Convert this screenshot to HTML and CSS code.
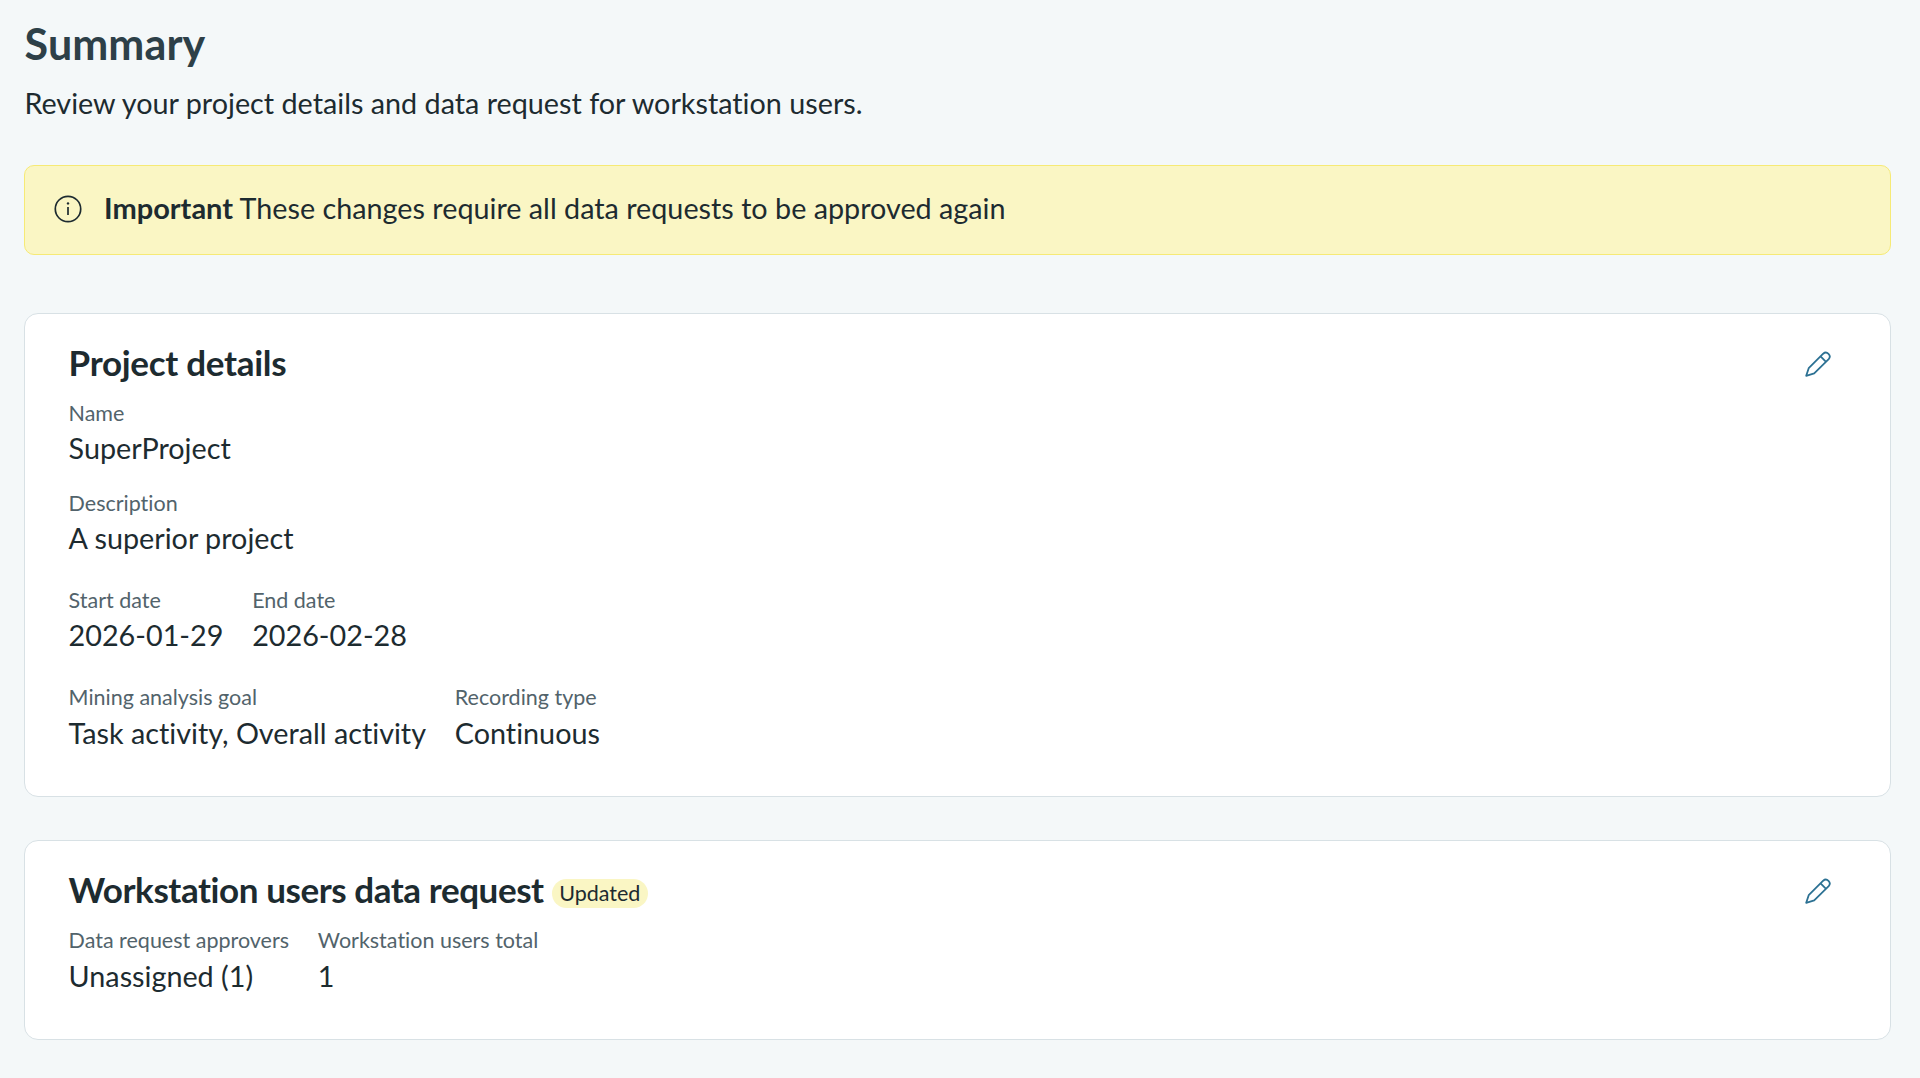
FILE: index.html
```html
<!DOCTYPE html>
<html lang="en">
<head>
    <meta charset="UTF-8">
    <meta name="viewport" content="width=device-width, initial-scale=1.0">
    <title>Summary</title>
    <link rel="stylesheet" href="styles.css">
</head>
<body>
    <main class="summary">
        <h1>Summary</h1>
        <p class="intro">Review your project details and data request for workstation users.</p>

        <div class="alert">
            <svg class="info-icon" viewBox="0 0 28 28">
                <circle cx="14" cy="14" r="12.7"/>
                <path d="M14 12v8"/>
                <circle class="dot" cx="14" cy="8.4" r="1.2"/>
            </svg>
            <p><strong>Important</strong> These changes require all data requests to be approved again</p>
        </div>

        <section class="card project">
            <div class="card-header">
                <h2>Project details</h2>
                <button class="edit" aria-label="Edit project details">
                    <svg viewBox="0 0 26 26">
                        <path d="M1.2 24.8L3.7 17.2L18.2 2.7A3.9 3.9 0 0 1 23.7 8.2L9.2 22.3ZM15.6 5.3L21 10.8"/>
                    </svg>
                </button>
            </div>
            <dl class="field">
                <dt>Name</dt>
                <dd>SuperProject</dd>
            </dl>
            <dl class="field">
                <dt>Description</dt>
                <dd>A superior project</dd>
            </dl>
            <div class="row">
                <dl class="field">
                    <dt>Start date</dt>
                    <dd>2026-01-29</dd>
                </dl>
                <dl class="field">
                    <dt>End date</dt>
                    <dd>2026-02-28</dd>
                </dl>
            </div>
            <div class="row">
                <dl class="field">
                    <dt>Mining analysis goal</dt>
                    <dd>Task activity, Overall activity</dd>
                </dl>
                <dl class="field">
                    <dt>Recording type</dt>
                    <dd>Continuous</dd>
                </dl>
            </div>
        </section>

        <section class="card users">
            <div class="card-header">
                <h2>Workstation users data request</h2>
                <span class="badge">Updated</span>
                <button class="edit" aria-label="Edit data request">
                    <svg viewBox="0 0 26 26">
                        <path d="M1.2 24.8L3.7 17.2L18.2 2.7A3.9 3.9 0 0 1 23.7 8.2L9.2 22.3ZM15.6 5.3L21 10.8"/>
                    </svg>
                </button>
            </div>
            <div class="row">
                <dl class="field">
                    <dt>Data request approvers</dt>
                    <dd>Unassigned (1)</dd>
                </dl>
                <dl class="field">
                    <dt>Workstation users total</dt>
                    <dd>1</dd>
                </dl>
            </div>
        </section>
    </main>
</body>
</html>
```
FILE: styles.css
```css
* {
    box-sizing: border-box;
}
body {
    margin: 0;
    font-family: Lato, sans-serif;
    font-size: 28.75px;
    line-height: 36px;
    font-variant-ligatures: none;
    color: #1d2b30;
    background-color: #f4f8f9;
}
h1, h2, p, dl, dd {
    margin: 0;
}
.summary {
    padding: 19px 29px 0 24px;
}
h1 {
    padding-left: 0.6px;
    font-size: 43px;
    line-height: 50px;
    letter-spacing: 0.1px;
    color: #2d4048;
}
.intro {
    margin-top: 16px;
    padding-left: 0.4px;
}
.alert {
    display: flex;
    align-items: center;
    height: 90px;
    margin-top: 44px;
    padding: 0 29px 2px;
    border: 1px solid #f6ea76;
    border-radius: 10px;
    background-color: #faf6c4;
}
.alert p {
    padding-bottom: 2px;
}
.alert strong {
    font-size: 29px;
}
.info-icon {
    width: 28px;
    height: 28px;
    margin-right: 22px;
    fill: none;
    stroke: #1d2b30;
    stroke-width: 1.7;
}
.info-icon .dot {
    fill: #1d2b30;
    stroke: none;
}
.card {
    padding: 28px 59.5px 0 43.6px;
    border: 1px solid #d8e1e5;
    border-radius: 14px;
    background-color: #fff;
}
.project {
    height: 484px;
    margin-top: 58px;
}
.users {
    height: 200px;
    margin-top: 43px;
}
.card-header {
    display: flex;
    align-items: center;
    height: 44px;
    margin-bottom: 14px;
}
h2 {
    padding-bottom: 4px;
    font-size: 35px;
    line-height: 44px;
    letter-spacing: -0.43px;
}
.project h2 {
    letter-spacing: -0.3px;
}
.edit {
    display: flex;
    margin-left: auto;
    padding: 0;
    border: none;
    background: none;
}
.edit svg {
    width: 26px;
    height: 26px;
    fill: none;
    stroke: #2c7193;
    stroke-width: 1.8;
    stroke-linejoin: round;
}
.badge {
    height: 29px;
    margin: 5px 0 0 8px;
    padding: 0 7.5px;
    border-radius: 14.5px;
    font-size: 21.5px;
    line-height: 28px;
    background-color: #faf6c4;
}
.field + .field {
    margin-top: 24px;
}
.field + .row, .row + .row {
    margin-top: 31px;
}
.row {
    display: flex;
    gap: 28.8px;
}
.row .field {
    margin-top: 0;
}
dt {
    margin-bottom: 4px;
    font-size: 21.5px;
    line-height: 26px;
    color: #52636b;
}
.row:last-child dd {
    padding-top: 1px;
}
```
